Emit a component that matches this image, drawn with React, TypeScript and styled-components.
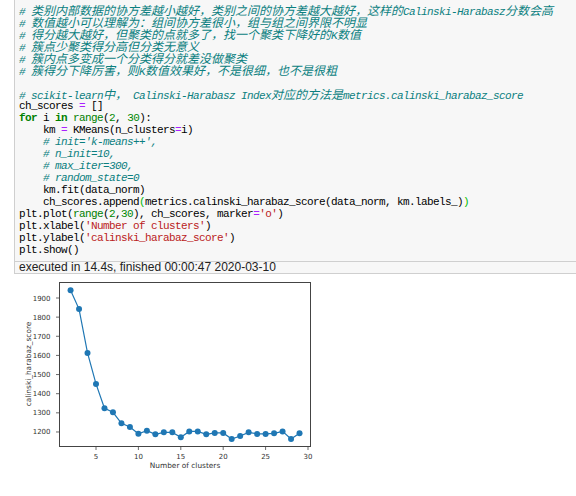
import React from "react";
import styled, { createGlobalStyle } from "styled-components";

const GlobalStyle = createGlobalStyle`
  html, body { margin: 0; padding: 0; background: #ffffff; }
  body { width: 576px; height: 496px; overflow: hidden; }
`;

const Page = styled.div`
  display: flex;
  flex-direction: column;
  width: 576px;
`;

const Cell = styled.div`
  margin-left: 14px;
  border-left: 1px solid #cfcfcf;
  display: flex;
  flex-direction: column;
`;

const CodeArea = styled.div`
  background: #f7f7f7;
  padding: 4px 0 5px 4px;
  border-bottom: 1px solid #cfcfcf;
`;

const CodeLine = styled.div`
  height: 12px;
  line-height: 12px;
  white-space: pre;
  font-family: "Liberation Mono", monospace;
  font-size: 11px;
  letter-spacing: -0.6px;
  color: #000;
`;

type Kind = "comment" | "kw" | "builtin" | "num" | "op" | "str" | "match" | "plain";

const colors: Record<Kind, string> = {
  comment: "#0b7f7f",
  kw: "#008000",
  builtin: "#008000",
  num: "#008800",
  op: "#aa22ff",
  str: "#ba2121",
  match: "#00bb00",
  plain: "#000000",
};

const Tok = styled.span<{ $kind: Kind }>`
  color: ${(p) => colors[p.$kind]};
  font-style: ${(p) => (p.$kind === "comment" ? "italic" : "normal")};
  font-weight: ${(p) => (p.$kind === "kw" ? "bold" : "normal")};
`;

const Cjk = styled.span`
  font-family: "Noto Sans CJK SC", sans-serif;
  font-size: 12px;
  letter-spacing: 0;
`;

const ExecInfo = styled.div`
  background: #f7f7f7;
  border-bottom: 1px solid #cfcfcf;
  height: 11px;
  line-height: 11px;
  padding-left: 4px;
  font-family: "Liberation Sans", Arial, sans-serif;
  font-size: 12px;
  color: #222;
  white-space: nowrap;
`;

const Output = styled.div`
  display: flex;
`;

const Figure = styled.svg`
  display: block;
`;

function splitCjk(text: string): React.ReactNode[] {
  const parts = text.split(/([\u3000-\u303f\u4e00-\u9fff\uff00-\uffef]+)/);
  return parts.map((p, i) =>
    /[\u3000-\u303f\u4e00-\u9fff\uff00-\uffef]/.test(p) ? <Cjk key={i}>{p}</Cjk> : <React.Fragment key={i}>{p}</React.Fragment>
  );
}

type Seg = [Kind, string];

const lines: Seg[][] = [
  [["comment", "# 类别内部数据的协方差越小越好，类别之间的协方差越大越好，这样的Calinski-Harabasz分数会高"]],
  [["comment", "# 数值越小可以理解为：组间协方差很小，组与组之间界限不明显"]],
  [["comment", "# 得分越大越好，但聚类的点就多了，找一个聚类下降好的K数值"]],
  [["comment", "# 簇点少聚类得分高但分类无意义"]],
  [["comment", "# 簇内点多变成一个分类得分就差没做聚类"]],
  [["comment", "# 簇得分下降厉害，则K数值效果好，不是很细，也不是很粗"]],
  [],
  [["comment", "# scikit-learn中， Calinski-Harabasz Index对应的方法是metrics.calinski_harabaz_score"]],
  [["plain", "ch_scores "], ["op", "="], ["plain", " []"]],
  [["kw", "for"], ["plain", " i "], ["kw", "in"], ["plain", " "], ["builtin", "range"], ["plain", "("], ["num", "2"], ["plain", ", "], ["num", "30"], ["plain", "):"]],
  [["plain", "    km "], ["op", "="], ["plain", " KMeans(n_clusters"], ["op", "="], ["plain", "i)"]],
  [["plain", "    "], ["comment", "# init='k-means++',"]],
  [["plain", "    "], ["comment", "# n_init=10,"]],
  [["plain", "    "], ["comment", "# max_iter=300,"]],
  [["plain", "    "], ["comment", "# random_state=0"]],
  [["plain", "    km.fit(data_norm)"]],
  [["plain", "    ch_scores.append"], ["match", "("], ["plain", "metrics.calinski_harabaz_score(data_norm, km.labels_)"], ["match", ")"]],
  [["plain", "plt.plot("], ["builtin", "range"], ["plain", "("], ["num", "2"], ["plain", ","], ["num", "30"], ["plain", "), ch_scores, marker"], ["op", "="], ["str", "'o'"], ["plain", ")"]],
  [["plain", "plt.xlabel("], ["str", "'Number of clusters'"], ["plain", ")"]],
  [["plain", "plt.ylabel("], ["str", "'calinski_harabaz_score'"], ["plain", ")"]],
  [["plain", "plt.show()"]],
];

const data = [1940, 1842, 1613, 1451, 1324, 1303, 1245, 1226, 1191, 1207, 1188, 1198, 1198, 1172, 1203, 1203, 1188, 1195, 1195, 1163, 1179, 1198, 1190, 1190, 1193, 1203, 1163, 1193];

const OY = 274;
const X = (v: number) => 53.6 + v * 8.48;
const Y = (v: number) => 298 + (1900 - v) * 0.1914 - OY;

const TICK_FONT = "'DejaVu Sans', sans-serif";

function Chart() {
  const left = 59.5;
  const right = 310.5;
  const top = 282.5 - OY;
  const bottom = 446.5 - OY;
  const pts = data.map((v, i) => `${X(i + 2).toFixed(2)},${Y(v).toFixed(2)}`).join(" ");
  const yTicks = [1200, 1300, 1400, 1500, 1600, 1700, 1800, 1900];
  const xTicks = [5, 10, 15, 20, 25, 30];
  return (
    <Figure width={330} height={212} viewBox="0 0 330 212">
      <rect x={left} y={top} width={right - left} height={bottom - top} fill="#fff" stroke="#444" strokeWidth={1} />
      {yTicks.map((t) => (
        <g key={t}>
          <line x1={left - 3.5} x2={left} y1={Y(t)} y2={Y(t)} stroke="#444" strokeWidth={0.8} />
          <text x={50.5} y={Y(t) + 2.5} textAnchor="end" fontFamily={TICK_FONT} fontSize={7} fill="#333">
            {t}
          </text>
        </g>
      ))}
      {xTicks.map((t) => (
        <g key={t}>
          <line x1={X(t)} x2={X(t)} y1={bottom} y2={bottom + 3.5} stroke="#444" strokeWidth={0.8} />
          <text x={X(t)} y={458.5 - OY} textAnchor="middle" fontFamily={TICK_FONT} fontSize={7} fill="#333">
            {t}
          </text>
        </g>
      ))}
      <polyline points={pts} fill="none" stroke="#1f77b4" strokeWidth={1.2} />
      {data.map((v, i) => (
        <circle key={i} cx={X(i + 2)} cy={Y(v)} r={3} fill="#1f77b4" />
      ))}
      <text x={185} y={468 - OY} textAnchor="middle" fontFamily={TICK_FONT} fontSize={7.4} fill="#333">
        Number of clusters
      </text>
      <text
        x={0}
        y={0}
        transform={`translate(30.5, ${364 - OY}) rotate(-90)`}
        textAnchor="middle"
        fontFamily={TICK_FONT}
        fontSize={7.4}
        fill="#333"
      >
        calinski_harabaz_score
      </text>
    </Figure>
  );
}

export default function App() {
  return (
    <Page>
      <GlobalStyle />
      <Cell>
        <CodeArea>
          {lines.map((segs, i) => (
            <CodeLine key={i}>
              {segs.length === 0 ? " " : segs.map(([k, t], j) => (
                <Tok key={j} $kind={k}>
                  {k === "comment" ? splitCjk(t) : t}
                </Tok>
              ))}
            </CodeLine>
          ))}
        </CodeArea>
        <ExecInfo>executed in 14.4s, finished 00:00:47 2020-03-10</ExecInfo>
      </Cell>
      <Output>
        <Chart />
      </Output>
    </Page>
  );
}
